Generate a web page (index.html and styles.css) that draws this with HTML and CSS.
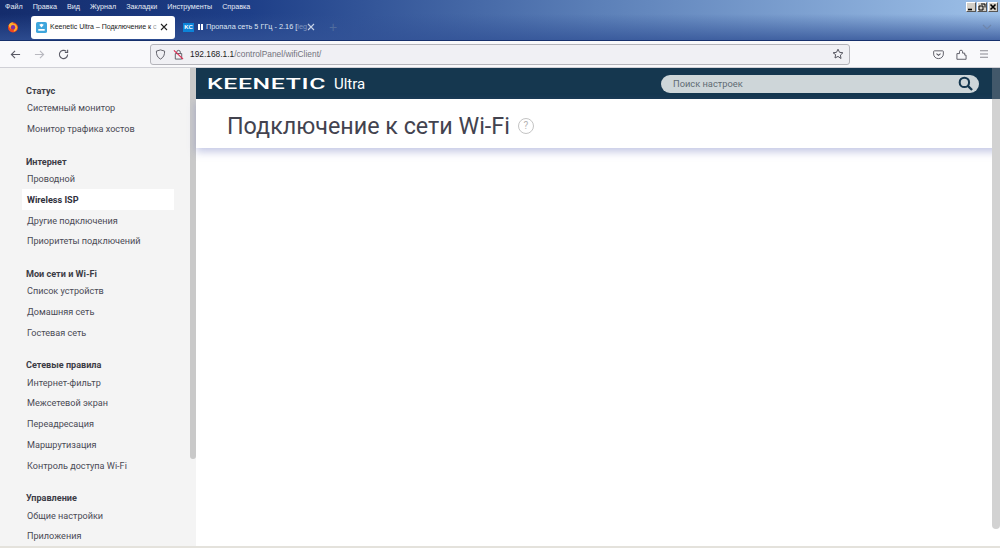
FILE: index.html
```html
<!DOCTYPE html>
<html lang="ru">
<head>
<meta charset="utf-8">
<title>Keenetic Ultra</title>
<link rel="stylesheet" href="styles.css">
</head>
<body>
<div class="chrome-top">
  <div class="menubar">
    <div class="menus">
      <span>Файл</span><span>Правка</span><span>Вид</span><span>Журнал</span><span>Закладки</span><span>Инструменты</span><span>Справка</span>
    </div>
    <div class="winbtns">
      <span class="winbtn"><svg viewBox="0 0 8 8" width="8" height="8"><path d="M1 6.500h4" stroke="#000" stroke-width="1.600"/></svg></span>
      <span class="winbtn"><svg viewBox="0 0 8 8" width="8" height="8"><path d="M3 1h4v3.500M1 3h4v4H1z" fill="none" stroke="#000"/></svg></span>
      <span class="winbtn"><svg viewBox="0 0 8 8" width="8" height="8"><path d="M1.500 1.500l5 5M6.500 1.500l-5 5" stroke="#000" stroke-width="1.600"/></svg></span>
    </div>
  </div>
  <div class="tabbar">
    <svg class="ff" viewBox="0 0 14 14" width="12" height="12"><circle cx="7" cy="7.500" r="5.800" fill="#f0441f"/><path d="M2 5c1-2.500 3.500-4 6-3.500-1 .3-1.500 1-1.500 1.500 2.500-.5 5 1.500 5.500 4 .3 2.500-1.500 5-4 5.500C7 11 9.500 9.500 9.500 7.500 9 6 7.500 5.500 6 5.800 4.500 6.200 4 8 5 9.500 3.500 9 2.500 7.500 2 5z" fill="#ffb02a"/><circle cx="7" cy="7.300" r="2.500" fill="#7a2fa8"/></svg>
    <div class="tab active">
      <svg class="favicon-k" viewBox="0 0 12 12" width="11" height="11"><rect width="12" height="12" rx="2" fill="#3fa6dc"/><path d="M2.500 7.500h7v2h-7zM3.500 3l2.500-1 2.500 1L6 6z" fill="#fff"/></svg>
      <span class="tab-title">Keenetic Ultra – Подключение к <span class="fade">с</span></span>
      <svg class="tab-x" viewBox="0 0 8 8" width="8" height="8"><path d="M1 1l6 6M7 1L1 7" stroke="#222" stroke-width="1.100"/></svg>
    </div>
    <div class="tab other">
      <span class="favicon-kc">KC</span>
      <span class="pause"></span>
      <span class="tab-title2">Пропала сеть 5 ГГц - 2.16 [<span class="fade">leg</span></span>
      <svg class="tab-x" viewBox="0 0 8 8" width="8" height="8"><path d="M1 1l6 6M7 1L1 7" stroke="#c8d4e8" stroke-width="1.100"/></svg>
    </div>
    <span class="plus">+</span>
    <svg class="chev" viewBox="0 0 10 6" width="10" height="6"><path d="M1 1l4 4 4-4" fill="none" stroke="#6f86ab" stroke-width="1.100"/></svg>
  </div>
</div>
<div class="toolbar">
  <svg class="nav" viewBox="0 0 12 12" width="11" height="11"><path d="M11 6H1.500M5.500 2L1.500 6l4 4" fill="none" stroke="#5b5b66" stroke-width="1.200"/></svg>
  <svg class="nav" viewBox="0 0 12 12" width="11" height="11"><path d="M1 6h9.500M6.500 2l4 4-4 4" fill="none" stroke="#b9b9c0" stroke-width="1.200"/></svg>
  <svg class="nav last" viewBox="0 0 12 12" width="11" height="11"><path d="M10.500 6a4.500 4.500 0 1 1-1.400-3.300M10.500 .8v3H7.500" fill="none" stroke="#5b5b66" stroke-width="1.200"/></svg>
  <div class="urlbar">
    <svg class="shield" viewBox="0 0 12 12" width="11" height="11"><path d="M6 1l4.500 1.300c0 4-1 6.900-4.500 8.700C2.500 9.200 1.500 6.300 1.500 2.300z" fill="none" stroke="#55555f" stroke-width="1"/></svg>
    <svg viewBox="0 0 12 12" width="11" height="11"><path d="M4 5V3.500a2 2 0 0 1 4 0V5M2.500 5h7v6h-7z" fill="none" stroke="#55555f"/><path d="M1 1.500l10 9.500" stroke="#e22850" stroke-width="1.200"/></svg>
    <span class="url"><b>192.168.1.1</b>/controlPanel/wifiClient/</span>
    <svg viewBox="0 0 12 12" width="12" height="12"><path d="M6 1.200l1.500 3.100 3.400.5-2.500 2.300.6 3.400L6 8.400l-3 1.600.6-3.400L1.100 4.800l3.400-.5z" fill="none" stroke="#55555f" stroke-linejoin="round"/></svg>
  </div>
  <div class="tool-right">
    <svg viewBox="0 0 12 12" width="11" height="11"><path d="M1.500 2h9a.8.800 0 0 1 .8.800V5.500a5.300 5 0 0 1-10.600 0V2.800A.8.800 0 0 1 1.500 2z" fill="none" stroke="#55555f"/><path d="M3.800 5L6 7l2.200-2" fill="none" stroke="#55555f" stroke-width="1.100"/></svg>
    <svg viewBox="0 0 12 12" width="11" height="11"><path d="M1 5h2.800V3a1.700 1.700 0 0 1 3.400 0v1.500h2.300v2.200h1.500v4.500H1z" fill="none" stroke="#55555f" stroke-linejoin="round"/></svg>
    <svg viewBox="0 0 10 10" width="10" height="10"><path d="M1 1.800h8M1 5h8M1 8.200h8" stroke="#8a8a92" stroke-width="1.100"/></svg>
  </div>
</div>
<div class="page">
  <aside class="sidebar">
    <nav class="nav-list">
      <section class="group">
        <h3>Статус</h3>
        <a>Системный монитор</a>
        <a>Монитор трафика хостов</a>
      </section>
      <section class="group">
        <h3>Интернет</h3>
        <a>Проводной</a>
        <a class="current">Wireless ISP</a>
        <a>Другие подключения</a>
        <a>Приоритеты подключений</a>
      </section>
      <section class="group">
        <h3>Мои сети и Wi-Fi</h3>
        <a>Список устройств</a>
        <a>Домашняя сеть</a>
        <a>Гостевая сеть</a>
      </section>
      <section class="group">
        <h3>Сетевые правила</h3>
        <a>Интернет-фильтр</a>
        <a>Межсетевой экран</a>
        <a>Переадресация</a>
        <a>Маршрутизация</a>
        <a>Контроль доступа Wi-Fi</a>
      </section>
      <section class="group">
        <h3>Управление</h3>
        <a>Общие настройки</a>
        <a>Приложения</a>
      </section>
    </nav>
    <div class="side-track"><div class="side-thumb"></div></div>
  </aside>
  <main class="main">
    <header class="brandbar">
      <span class="logo-box"><span class="logo">KEENETIC</span></span>
      <span class="model">Ultra</span>
      <div class="search">
        <span>Поиск настроек</span>
        <svg viewBox="0 0 16 16" width="15" height="15"><circle cx="6.800" cy="6.800" r="5" fill="none" stroke="#15374f" stroke-width="2.200"/><path d="M10.500 10.500l4.500 4.500" stroke="#15374f" stroke-width="2.400"/></svg>
      </div>
    </header>
    <div class="titlebar">
      <h1>Подключение к сети Wi-Fi</h1>
      <span class="help">?</span>
    </div>
    <div class="main-track"><div class="main-thumb"></div></div>
  </main>
</div>
<div class="bottom-edge"></div>
</body>
</html>
```
FILE: styles.css
```css
* { box-sizing: border-box; }
html, body { margin: 0; height: 100%; overflow: hidden; }
body {
  width: 1000px; height: 548px; display: flex; flex-direction: column;
  font-family: Roboto, "Liberation Sans", sans-serif; background: #fff;
}
.chrome-top {
  height: 41px; flex: none; display: flex; flex-direction: column;
  background:
    linear-gradient(180deg, rgba(34,62,130,0) 0%, rgba(34,62,130,0) 35%, rgba(50,82,150,.8) 100%),
    linear-gradient(90deg, #142c6c 0%, #1e3f88 25%, #5c80b8 60%, #9dc0e8 100%);
  border-bottom: 1px solid #16306c;
}
.menubar { height: 13px; display: flex; justify-content: space-between; align-items: center; }
.menus {
  display: flex; gap: 10px; padding-left: 5px;
  font: 7.2px/13px "Liberation Sans", sans-serif; color: #e6ecf6;
}
.winbtns { display: flex; gap: 1px; padding: 1px 2px 0 0; }
.winbtn {
  width: 10px; height: 10px; background: #d4d0c8; display: flex; align-items: center; justify-content: center;
  border: 1px solid; border-color: #fff #555 #555 #fff;
}
.tabbar { height: 27px; display: flex; align-items: center; position: relative; }
.ff { margin-left: 7px; margin-right: 12px; flex: none; }
.tab { height: 23px; display: flex; align-items: center; border-radius: 3px; margin-top: 1px; flex: none; }
.tab.active { width: 144px; background: #fff; padding: 0 7px 0 5px; color: #222; }
.tab.other { width: 140px; padding: 0 1px 0 8px; color: #dfe6f2; }
.favicon-k { flex: none; margin-right: 3px; }
.tab-title { font: 7px/12px "Liberation Sans", sans-serif; white-space: nowrap; flex: 1; }
.tab-title2 { font: 7.3px/12px "Liberation Sans", sans-serif; white-space: nowrap; flex: 1; }
.fade { opacity: .45; }
.tab-x { flex: none; }
.favicon-kc {
  width: 11px; height: 9px; background: #0c84d8; color: #fff; font: bold 6px/9px "Liberation Sans", sans-serif;
  text-align: center; flex: none; margin-right: 4px;
}
.pause { width: 5px; height: 6px; border-left: 2px solid #fff; border-right: 2px solid #fff; flex: none; margin-right: 3px; }
.plus { color: #4f6c9e; font: 14px/14px "Liberation Sans", sans-serif; margin-left: 14px; }
.chev { position: absolute; right: 8px; top: 11px; }
.toolbar {
  height: 27px; flex: none; background: #f9f9fb; display: flex; align-items: center;
  padding-left: 10px; border-bottom: 1px solid #d0d0d6;
}
.nav { margin-right: 13px; flex: none; }
.nav.last { margin-right: 81px; }
.urlbar {
  width: 700px; height: 21px; background: #f0f0f4; border: 1px solid #b4b4ba; border-radius: 3px;
  display: flex; align-items: center; padding: 0 5px 0 4px; gap: 6px; flex: none;
}
.shield { margin-right: 1px; }
.url { font: 8.4px/12px "Liberation Sans", sans-serif; color: #72727c; flex: 1; white-space: nowrap; }
.url b { font-weight: normal; color: #1c1b22; }
.tool-right { display: flex; align-items: center; gap: 12px; margin-left: 83px; }
.page { flex: 1; min-height: 0; display: flex; }
.sidebar { width: 196px; flex: none; display: flex; background: #f4f4f4; overflow: hidden; }
.nav-list { width: 190px; flex: none; padding: 16px 16px 0 22px; }
.group { margin-bottom: 15px; }
.group h3 { margin: 0; padding-left: 4px; font-size: 9.1px; line-height: 14px; font-weight: 700; color: #3c3c46; }
.group a { display: flex; align-items: center; height: 20.8px; padding-left: 5px; font-size: 9.1px; color: #4a4a54; white-space: nowrap; }
.group a.current { background: #fff; font-weight: 700; color: #30303c; }
.side-track { width: 6px; background: #f4f4f4; }
.side-thumb { width: 6px; height: 391px; background: #c9c9c9; border-radius: 0 0 3px 3px; }
.main { flex: 1; min-width: 0; position: relative; background: #fff; }
.brandbar { height: 31px; background: #15374f; display: flex; align-items: center; padding-left: 11px; }
.logo-box { width: 116px; flex: none; }
.logo {
  display: inline-block; font: 500 15.5px/15px Roboto, sans-serif; color: #fff; letter-spacing: .4px;
  white-space: nowrap; transform: scaleX(1.6); transform-origin: left center;
}
.model { margin-left: 11px; font-size: 15px; color: #fff; }
.search {
  width: 318px; height: 18px; margin-left: auto; margin-right: 21px; border-radius: 9px; background: #ced6d9;
  display: flex; align-items: center; justify-content: space-between; padding: 0 6px 0 12px;
  font-size: 9.3px; color: #5f6b73;
}
.titlebar {
  height: 49px; display: flex; align-items: center; padding: 4px 0 0 31px; background: #fff;
  box-shadow: 0 4px 8px rgba(110,120,190,.4);
}
.titlebar h1 { margin: 0; font-size: 23.3px; font-weight: 400; color: #43434f; white-space: nowrap; }
.help {
  width: 16px; height: 16px; margin-left: 8px; border-radius: 50%; border: 1px solid #c4c4c4; color: #b4b4b4;
  font-size: 10px; display: flex; align-items: center; justify-content: center;
}
.main-track { position: absolute; right: 0; top: 0; width: 8px; height: 461px; }
.main-thumb { height: 100%; background: #d2d2d2; border-radius: 0 0 4px 4px; }
.main-track::before { content: ""; position: absolute; inset: 0 0 auto 0; height: 31px; background: #42586a; }
.bottom-edge { height: 2px; flex: none; background: #e4e2dc; }
```
